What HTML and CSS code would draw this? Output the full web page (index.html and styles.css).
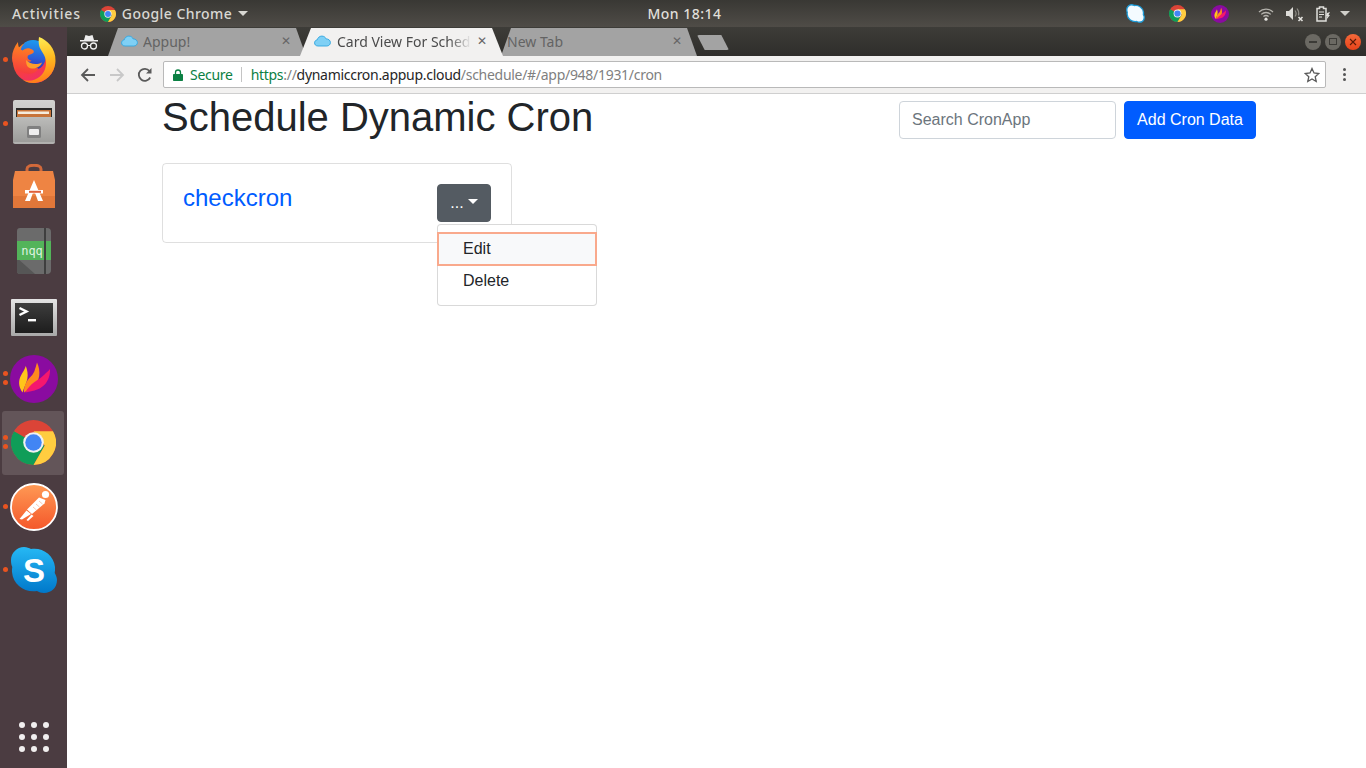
FILE: index.html
```html
<!DOCTYPE html>
<html lang="en">
<head>
<meta charset="utf-8">
<title>Card View For Schedule</title>
<link rel="stylesheet" href="styles.css">
</head>
<body>
<svg class="defs" width="0" height="0" aria-hidden="true">
  <defs>
    <symbol id="chrome" viewBox="0 0 48 48">
      <circle cx="24" cy="24" r="24" fill="#db4437"/>
      <path d="M24 24 L3.2 12 A24 24 0 0 0 24 48 L36 27.2Z" fill="#0f9d58"/>
      <path d="M24 12 H44.8 A24 24 0 0 1 24 48 L36 27.2 Z" fill="#ffcd40"/>
      <circle cx="24" cy="24" r="11" fill="#f1f1f1"/>
      <circle cx="24" cy="24" r="8.8" fill="#4285f4"/>
    </symbol>
    <symbol id="cloud" viewBox="0 0 18 12">
      <path d="M4.3 11.3C2 11.3.6 9.800.6 8c0-1.700 1.200-3 2.800-3.200C4 2.500 5.900.8 8.300.8c2.100 0 3.800 1.200 4.600 3 2.500-.1 4.500 1.700 4.500 3.900 0 2-1.700 3.600-3.900 3.600Z" fill="#7fd0f5" stroke="#35a8e0" stroke-width="1"/>
    </symbol>
    <symbol id="flockmark" viewBox="0 0 48 48">
      <circle cx="24" cy="24" r="24" fill="#8a0ba0"/>
      <path d="M12.500 37.500C8 31 8.500 25 11 20.500c1.500-3 3.500-5.500 4.800-9.500 1.500 4 2.500 8 1.500 13-.8 4.500-3.500 8.500-4.800 13.500Z" fill="#ffc61a"/>
      <path d="M14 37.500c-.2-6 2-10.500 5-14 1.500-1.800 3.500-3 5.500-7.500.8-2.500 1.500-5 2.500-8.500 2 4 2.800 9 2.200 13.500-.5 3.500-2 6.500-5 9.500-3 2.800-6.500 4.500-10.200 7Z" fill="#ff8a1e"/>
      <path d="M15.500 37.500c1.500-4 5-7.500 9-10.500 3.500-2.500 6.500-4 10-7.500 2-2 4-3.500 5.500-5.500.2 6-1.500 11.500-5.500 15.800-3 3.200-6.500 4.700-10 5.700-3 .8-6 1.300-9 2Z" fill="#f5176e"/>
    </symbol>
  </defs>
</svg>

<header class="topbar">
  <div class="topbar-left">
    <span class="top-label top-activities">Activities</span>
    <span class="app-menu">
      <svg class="app-icon"><use href="#chrome"/></svg>
      <span class="top-label">Google Chrome</span>
      <span class="caret-top"></span>
    </span>
  </div>
  <div class="clock">Mon 18:14</div>
  <div class="tray">
    <svg class="tray-skype" viewBox="-2 -2 50 50"><path d="M13 0c3 0 5 1 7 2 11-2 23 6 24 18 .2 2 0 4-.3 6 1 2 2.300 4 2.300 7 0 8-6 13-13 13-3 0-5-1-7-2-12 2-24-6-25-19-.1-2 0-3 .3-5C.4 18 0 16 0 13 0 6 6 0 13 0Z" fill="#f4fbff" stroke="#1d9ad6" stroke-width="3.500"/></svg>
    <svg class="tray-chrome"><use href="#chrome"/></svg>
    <svg class="tray-flock"><use href="#flockmark"/></svg>
    <svg class="tray-wifi" viewBox="0 0 16 14"><path d="M1 5a10 10 0 0 1 14 0M3.200 7.400a7 7 0 0 1 9.600 0M5.400 9.600a4 4 0 0 1 5.200 0" fill="none" stroke="#b4b2ac" stroke-width="1.300"/><circle cx="8" cy="12.200" r="1.600" fill="#e4e3df"/></svg>
    <svg class="tray-sound" viewBox="0 0 18 16"><path d="M0 5h3l4-4v13l-4-4H0Z" fill="#dddcd8"/><path d="M9 4.500a5 5 0 0 1 0 6M11 2.500a8 8 0 0 1 1.500 7" fill="none" stroke="#8f8d87" stroke-width="1.200"/><path d="M12.500 11l4 4m0-4l-4 4" stroke="#e4e3df" stroke-width="1.600"/></svg>
    <svg class="tray-battery" viewBox="0 0 15 16"><path d="M1 2.500h2.500V1h4v1.500H10V15H1Z" fill="none" stroke="#e0dfdb" stroke-width="1.500"/><path d="M3 6h5M3 8.500h5M3 11h3" stroke="#e0dfdb" stroke-width="1.200"/><path d="M11 7l3-1-1.500 3H14l-3.500 4.500.8-3.500H10Z" fill="#e0dfdb"/></svg>
    <span class="caret-tray"></span>
  </div>
</header>

<div class="desktop">
  <nav class="dock">
    <div class="dock-item">
      <span class="run run-one"></span>
      <svg class="ic-firefox" viewBox="0 0 44 46">
        <defs>
          <linearGradient id="ffbody" x1="0.1" y1="0" x2="0.6" y2="1"><stop offset="0" stop-color="#ff9a1a"/><stop offset=".55" stop-color="#f9403a"/><stop offset="1" stop-color="#ef2d6e"/></linearGradient>
          <linearGradient id="fftop" x1="0.4" y1="0" x2="0.5" y2="1"><stop offset="0" stop-color="#ffee55"/><stop offset=".5" stop-color="#ffb81f"/><stop offset="1" stop-color="#ff7a1a"/></linearGradient>
          <linearGradient id="ffglobe" x1="0.6" y1="0" x2="0.5" y2="1"><stop offset="0" stop-color="#1c9bf0"/><stop offset=".6" stop-color="#2c5ed8"/><stop offset="1" stop-color="#3a2bb0"/></linearGradient>
          <linearGradient id="fffox" x1="0.5" y1="0" x2="0.4" y2="1"><stop offset="0" stop-color="#ff8a1e"/><stop offset="1" stop-color="#f53a3f"/></linearGradient>
        </defs>
        <circle cx="22" cy="25" r="21" fill="url(#ffbody)"/>
        <path d="M21 3c8 0 13 6 13 15 0 9-5 15-13 15S8 27 8 18 13 3 21 3Z" fill="url(#ffglobe)"/>
        <path d="M27 0c8 3 17 11 16.500 24C43 37 33 46 21 46c-4 0-7-1-10-3 4 1 8 1 12-.5 7-3 11-9 11-16.500 0-9-6-12-7-18-.4-3-.4-5 0-8Z" fill="url(#fftop)"/>
        <path d="M6 5c0 4 1 7 4.500 8.500C13 11 17 10 21 13c1.500 1.300 1 3-1 3.800-2.500 1-4.500 1.200-4.500 3.500 0 2 2 3 4 3.500-1 1-3 1-4 .5 1 4 5 7 11 7-2 4-6 6-11 5.500C7 35.500 0 30 0 21c0-6 2.500-11.500 6-16Z" fill="url(#fffox)"/>
        <path d="M14 23c4 4 10 5.500 16 2.500-1.500 5-9 8-14 4.500-1.500-1.500-2-4.500-2-7Z" fill="#ff9d2c"/>
      </svg>
    </div>
    <div class="dock-item item-files">
      <span class="run run-one"></span>
      <svg class="ic-files" viewBox="0 0 42 44">
        <defs>
          <linearGradient id="cab" x1="0" y1="0" x2="0" y2="1"><stop offset="0" stop-color="#d2d2d0"/><stop offset="1" stop-color="#b0b0ae"/></linearGradient>
          <linearGradient id="cabfront" x1="0" y1="0" x2="0" y2="1"><stop offset="0" stop-color="#bcbcba"/><stop offset="1" stop-color="#9c9c9a"/></linearGradient>
        </defs>
        <rect width="42" height="44" rx="2" fill="url(#cab)"/>
        <rect x="3" y="8" width="36" height="10" fill="#2c2a28"/>
        <rect x="4" y="10" width="34" height="8" fill="#c8743a"/>
        <rect x="5" y="11.500" width="31" height="2.500" fill="#f5ecdd"/>
        <rect y="17" width="42" height="25" fill="url(#cabfront)"/>
        <rect x="14" y="26" width="14" height="12" rx="1.500" fill="#808080"/>
        <rect x="16" y="29" width="10" height="6" rx="1" fill="#eee"/>
      </svg>
    </div>
    <div class="dock-item item-store">
      <svg class="ic-store" viewBox="0 0 42 44">
        <path d="M14 11V5c0-5 14-5 14 0v6" fill="none" stroke="#d2693a" stroke-width="3"/>
        <path d="M2 7h38l2 9v28H0V16Z" fill="#ee8443"/>
        <path d="M0 32h42v12H0Z" fill="#e17739"/>
        <path d="M21 16l-9 21h5l4-11 4 11h5Z" fill="#fff"/>
        <rect x="12" y="26" width="18" height="3.500" fill="#fff"/>
        <rect x="16" y="26.800" width="12" height="2" fill="#e0603a"/>
      </svg>
    </div>
    <div class="dock-item">
      <svg class="ic-nqq" viewBox="0 0 34 46">
        <path d="M3 0h27a4 4 0 0 1 4 4v38a4 4 0 0 1-4 4H3a3 3 0 0 1-3-3V3a3 3 0 0 1 3-3Z" fill="#6b6b6b"/>
        <path d="M0 30l18 16H3a3 3 0 0 1-3-3Z" fill="#565656"/>
        <rect x="27" width="2" height="46" fill="#3f3f3f"/>
        <rect y="13" width="34" height="19" fill="#53b45a"/>
        <rect x="27" y="13" width="2" height="19" fill="#3f3f3f"/>
        <text x="15" y="27" class="nqq-text">nqq</text>
      </svg>
    </div>
    <div class="dock-item item-term">
      <svg class="ic-term" viewBox="0 0 46 37">
        <defs>
          <linearGradient id="termframe" x1="0" y1="0" x2="0" y2="1"><stop offset="0" stop-color="#e4e4e4"/><stop offset="1" stop-color="#a8a8a8"/></linearGradient>
          <linearGradient id="terminner" x1="0" y1="0" x2="0" y2="1"><stop offset="0" stop-color="#3d3d3d"/><stop offset="1" stop-color="#1d1d1d"/></linearGradient>
        </defs>
        <rect width="46" height="37" rx="1" fill="url(#termframe)"/>
        <rect x="4" y="4" width="38" height="30" fill="url(#terminner)"/>
        <path d="M8.500 9l7 3.500-7 3.500" fill="none" stroke="#fff" stroke-width="2.400"/>
        <rect x="17" y="20" width="8" height="2.400" fill="#fff"/>
      </svg>
    </div>
    <div class="dock-item">
      <span class="run run-two"></span><span class="run run-three"></span>
      <svg class="ic-flock"><use href="#flockmark"/></svg>
    </div>
    <div class="dock-item dock-active">
      <span class="run run-two"></span><span class="run run-three"></span>
      <svg class="ic-chrome"><use href="#chrome"/></svg>
    </div>
    <div class="dock-item item-postman">
      <span class="run run-one"></span>
      <svg class="ic-postman" viewBox="0 0 48 48">
        <defs><linearGradient id="pm" x1="0" y1="0" x2="0" y2="1"><stop offset="0" stop-color="#ff9a55"/><stop offset="1" stop-color="#f4572a"/></linearGradient></defs>
        <circle cx="24" cy="24" r="23" fill="url(#pm)" stroke="#fff" stroke-width="1.800"/>
        <circle cx="35.500" cy="11.500" r="3.600" fill="#fff"/>
        <path d="M29 14.500l6.500 2.500-1 3.500-12.500 10.500-5-4.500Z" fill="#fff"/>
        <path d="M29 18l3.500 3M26 21l3.500 3M23 24l3.500 3" stroke="#f9a27a" stroke-width=".6"/>
        <path d="M16.500 27.500l4.500 3.500-9 5.500-2.500-.5Z" fill="#fff"/>
        <path d="M21.500 31.500l2 1.500-5.500 5-1.500-1Z" fill="#fff"/>
      </svg>
    </div>
    <div class="dock-item">
      <span class="run run-one"></span>
      <svg class="ic-skype" viewBox="0 0 46 46">
        <defs><linearGradient id="sk" x1="0" y1="0" x2="0" y2="1"><stop offset="0" stop-color="#26b8f4"/><stop offset="1" stop-color="#0078ca"/></linearGradient></defs>
        <path d="M13 0c3 0 5 1 7 2 11-2 23 6 24 18 .2 2 0 4-.3 6 1 2 2.300 4 2.300 7 0 8-6 13-13 13-3 0-5-1-7-2-12 2-24-6-25-19-.1-2 0-3 .3-5C.4 18 0 16 0 13 0 6 6 0 13 0Z" fill="url(#sk)"/>
        <text x="23" y="35" class="skype-text">S</text>
      </svg>
    </div>
    <div class="dock-grid">
      <i></i><i></i><i></i><i></i><i></i><i></i><i></i><i></i><i></i>
    </div>
  </nav>

  <div class="browser">
    <div class="tabstrip">
      <svg class="incognito" viewBox="0 0 18 16"><path d="M4 6l1.500-5 3.500 1 3.500-1L14 6Z" fill="#eee"/><rect x="0" y="6" width="18" height="1.500" fill="#eee"/><circle cx="4.500" cy="12" r="3" fill="none" stroke="#eee" stroke-width="1.300"/><circle cx="13.500" cy="12" r="3" fill="none" stroke="#eee" stroke-width="1.300"/><path d="M7.500 11.500h3" stroke="#eee"/></svg>
      <div class="tab tab-bg tab-first">
        <svg class="tab-fav"><use href="#cloud"/></svg>
        <span class="tab-title">Appup!</span>
        <span class="tab-x">✕</span>
      </div>
      <div class="tab tab-on">
        <svg class="tab-fav"><use href="#cloud"/></svg>
        <span class="tab-title tab-fade">Card View For Sched</span>
        <span class="tab-x">✕</span>
      </div>
      <div class="tab tab-bg tab-third">
        <span class="tab-title">New Tab</span>
        <span class="tab-x">✕</span>
      </div>
      <div class="newtab"></div>
      <div class="winbtns">
        <span class="winbtn"><i class="win-min"></i></span>
        <span class="winbtn"><i class="win-max"></i></span>
        <span class="winbtn win-close">
          <svg viewBox="0 0 8 8"><path d="M1 1l6 6m0-6L1 7" stroke="#5a1a08" stroke-width="1.100"/></svg>
        </span>
      </div>
    </div>

    <div class="toolbar">
      <svg class="nav-ic" viewBox="0 0 16 16"><path d="M15 8H2M8 2L2 8l6 6" fill="none" stroke="#5a5a5a" stroke-width="1.800"/></svg>
      <svg class="nav-ic nav-fwd" viewBox="0 0 16 16"><path d="M1 8h13M8 2l6 6-6 6" fill="none" stroke="#c8c8c8" stroke-width="1.800"/></svg>
      <svg class="nav-ic nav-reload" viewBox="0 0 16 16"><path d="M13.200 10.500A6 6 0 1 1 12.500 4" fill="none" stroke="#5a5a5a" stroke-width="1.800"/><path d="M14.500 1v5.500H9Z" fill="#5a5a5a"/></svg>
      <div class="omnibox">
        <svg class="lock" viewBox="0 0 10 12"><path d="M2.500 5V3.500a2.500 2.500 0 0 1 5 0V5" fill="none" stroke="#0b8043" stroke-width="1.300"/><rect y="5" width="10" height="7" rx=".8" fill="#0b8043"/></svg>
        <span class="secure">Secure</span>
        <span class="sep"></span>
        <span class="url"><span class="url-scheme">https</span><span class="url-dim">://</span><span class="url-host">dynamiccron.appup.cloud</span><span class="url-dim">/schedule/#/app/948/1931/cron</span></span>
        <svg class="star" viewBox="0 0 16 16"><path d="M8 1.500l2 4.500 4.800.5-3.600 3.200 1 4.800L8 12l-4.200 2.500 1-4.800L1.200 6.500 6 6Z" fill="none" stroke="#5a5a5a" stroke-width="1.300"/></svg>
      </div>
      <div class="menu-dots"><i></i><i></i><i></i></div>
    </div>

    <main class="page">
      <div class="page-head">
        <h1 class="page-title">Schedule Dynamic Cron</h1>
        <div class="head-actions">
          <input class="search" type="text" placeholder="Search CronApp">
          <button class="btn-add" type="button">Add Cron Data</button>
        </div>
      </div>
      <section class="card">
        <a class="card-link" href="#">checkcron</a>
        <div class="dropdown">
          <button class="btn-more" type="button">...<span class="caret-btn"></span></button>
          <div class="dropdown-menu">
            <a class="dd-item dd-focus" href="#">Edit</a>
            <a class="dd-item" href="#">Delete</a>
          </div>
        </div>
      </section>
    </main>
  </div>
</div>
</body>
</html>
```

FILE: styles.css
```css
* { box-sizing: border-box; }
html, body { margin: 0; height: 768px; overflow: hidden; background: #fff; }
body { display: flex; flex-direction: column; font-family: "Liberation Sans", Arial, sans-serif; }
.defs { position: absolute; }

/* GNOME top bar */
.topbar {
  height: 27px; flex: none;
  display: grid; grid-template-columns: 1fr auto 1fr; align-items: center;
  background: linear-gradient(#393834, #4f4c47);
  color: #d9d8d3;
  font: 500 14px "Noto Sans", sans-serif;
}
.topbar-left { display: flex; align-items: center; padding-left: 12px; }
.top-label { letter-spacing: .45px; }
.top-activities { letter-spacing: .85px; }
.app-menu { display: flex; align-items: center; margin-left: 19px; }
.app-icon { width: 16px; height: 16px; margin-right: 6px; }
.caret-top { margin-left: 6px; border: 5px solid transparent; border-top-color: #d9d8d3; border-bottom-width: 0; }
.clock { letter-spacing: .5px; color: #e0dfda; margin-left: 3px; }
.tray { display: flex; align-items: center; justify-content: flex-end; padding-right: 16px; }
.tray-skype { width: 19px; height: 19px; margin-right: 24px; }
.tray-chrome { width: 17px; height: 17px; margin-right: 25px; }
.tray-flock { width: 18px; height: 18px; margin-right: 29px; }
.tray-wifi { width: 16px; height: 14px; margin-right: 12px; }
.tray-sound { width: 18px; height: 16px; margin-right: 12px; }
.tray-battery { width: 15px; height: 16px; margin-right: 9px; }
.caret-tray { border: 5px solid transparent; border-top-color: #d0cfca; border-bottom-width: 0; }

.desktop { flex: 1; display: flex; min-height: 0; }

/* Dock */
.dock {
  width: 67px; flex: none;
  display: flex; flex-direction: column;
  background: #4b3c41; padding-top: 1px;
}
.dock-item { position: relative; height: 63.800px; flex: none; display: flex; align-items: center; justify-content: center; }
.dock-active { margin: 0 3px 0 2px; background: #635559; border-radius: 3px; }
.dock-active .run { left: 1px; }
.run { position: absolute; left: 3px; width: 5px; height: 5px; border-radius: 50%; background: #e95420; }
.run-one { top: 29px; }
.run-two { top: 24px; }
.run-three { top: 33px; }
.item-files svg { margin-top: -4px; }
.item-store svg { margin-top: -2px; }
.item-term svg { margin-top: 4px; }
.item-postman svg { margin-top: 2px; }
.ic-firefox { width: 44px; height: 46px; }
.ic-files { width: 42px; height: 44px; }
.ic-store { width: 42px; height: 44px; }
.ic-nqq { width: 34px; height: 46px; }
.ic-term { width: 46px; height: 37px; }
.ic-flock { width: 48px; height: 48px; }
.ic-chrome { width: 45px; height: 45px; margin-left: 1px; }
.ic-postman { width: 48px; height: 48px; }
.ic-skype { width: 46px; height: 46px; }
.nqq-text { font: 12px "DejaVu Sans Mono", monospace; fill: #dff3e0; text-anchor: middle; }
.skype-text { font: 700 33px "Liberation Sans", sans-serif; fill: #fff; text-anchor: middle; }
.dock-grid {
  margin: auto auto 16px; display: grid; grid-template-columns: repeat(3, 6px); gap: 6px;
}
.dock-grid i { width: 6px; height: 6px; border-radius: 50%; background: #f1efef; }

/* Chrome window */
.browser { flex: 1; min-width: 0; display: flex; flex-direction: column; background: #fff; }
.tabstrip {
  height: 29px; flex: none; display: flex; align-items: flex-end;
  background: linear-gradient(#3d3c38, #2f2e2b);
  padding-left: 13px;
}
.incognito { width: 18px; height: 16px; margin-bottom: 6px; margin-right: 10px; flex: none; }
.tab {
  height: 28px; padding-bottom: 2px; display: flex; align-items: center; flex: none;
  font: 14px "Noto Sans", sans-serif;
  clip-path: polygon(0 100%, 10px 0, calc(100% - 10px) 0, 100% 100%);
}
.tab-bg { background: #a3a3a3; color: #636363; }
.tab-first { width: 198px; padding-left: 13px; padding-right: 15px; margin-right: -6px; }
.tab-first .tab-title { margin-left: -1px; }
.tab-on { width: 203px; padding-left: 14px; padding-right: 16px; background: #f2f1f0; color: #4b4b4b; margin-right: -2px; position: relative; z-index: 1; clip-path: polygon(0 100%, 11px 0, calc(100% - 11px) 0, 100% 100%); }
.tab-third { width: 196px; padding-left: 6px; padding-right: 15px; }
.tab-third .tab-x { margin-left: auto; }
.tab-fav { width: 17px; height: 12px; margin-right: 6px; flex: none; }
.tab-title { flex: 1; min-width: 0; white-space: nowrap; overflow: hidden; }
.tab-fade { -webkit-mask-image: linear-gradient(90deg, #000 82%, transparent 98%); mask-image: linear-gradient(90deg, #000 82%, transparent 98%); }
.tab-x { flex: none; font-size: 12px; line-height: 1; color: #666; margin-left: 3px; }
.newtab {
  width: 32px; height: 15px; margin: 0 0 6px 0; flex: none;
  background: #a3a3a3; clip-path: polygon(0 0, 76% 0, 100% 100%, 24% 100%);
  border-radius: 2px;
}
.winbtns { margin-left: auto; display: flex; align-items: center; gap: 4px; padding: 0 5px 0 0; align-self: center; }
.winbtn { width: 16px; height: 16px; border-radius: 50%; background: #6b6963; display: flex; align-items: center; justify-content: center; }
.win-min { width: 8px; height: 2px; background: #3c3b37; }
.win-max { width: 8px; height: 7px; border: 1px solid #3c3b37; }
.win-close { background: linear-gradient(#f4693a, #e8431a); }
.win-close svg { width: 8px; height: 8px; }

.toolbar {
  height: 38px; flex: none; display: flex; align-items: center;
  background: #f2f1f0; border-bottom: 1px solid #cfcfcf;
  padding-left: 13px;
}
.nav-ic { width: 16px; height: 16px; flex: none; margin-right: 13px; }
.nav-reload { margin-right: 10px; margin-left: -1px; }
.omnibox {
  width: 1163px; height: 27px; flex: none; display: flex; align-items: center;
  background: #fff; border: 1px solid #b9b9b9; border-radius: 2px;
  padding: 0 5px 0 9px;
  font: 14px "Noto Sans", sans-serif; white-space: nowrap; letter-spacing: -.29px;
}
.lock { width: 10px; height: 12px; margin-right: 7px; flex: none; }
.secure { color: #0b8043; }
.sep { width: 1px; height: 15px; background: #c4c4c4; margin: 0 9px 0 8px; }
.url-scheme { color: #0b8043; }
.url-dim { color: #7f7f7f; }
.url-host { color: #262626; }
.star { width: 16px; height: 16px; margin-left: auto; }
.menu-dots { margin-left: 17px; display: grid; gap: 2px; }
.menu-dots i { width: 3px; height: 3px; border-radius: 50%; background: #555; }

/* Page */
.page { flex: 1; padding: 0 110px 0 95px; color: #212529; font-size: 16px; }
.page-head { display: flex; justify-content: space-between; align-items: flex-start; }
.page-title { margin: 0; font-size: 40px; font-weight: 500; line-height: 46px; }
.head-actions { display: flex; gap: 8px; margin-top: 7px; }
.search {
  width: 217px; height: 38px; padding: 6px 12px;
  border: 1px solid #ced4da; border-radius: 4px;
  font: 16px "Liberation Sans", sans-serif; color: #495057;
}
.search::placeholder { color: #6c757d; opacity: 1; }
.btn-add {
  width: 132px; height: 38px; border: 1px solid #005cff; border-radius: 4px;
  background: #005cff; color: #fff; font: 16px "Liberation Sans", sans-serif;
}
.card {
  width: 350px; height: 80px; margin-top: 23px;
  border: 1px solid rgba(0,0,0,.125); border-radius: 4px;
  padding: 20px; display: flex; justify-content: space-between; align-items: flex-start;
}
.card-link { font-size: 24px; line-height: 28px; color: #005cff; text-decoration: none; }
.dropdown { position: relative; }
.btn-more {
  width: 54px; height: 38px; border: 1px solid #545b62; border-radius: 4px;
  background: #545b62; color: #fff; font: 16px "Liberation Sans", sans-serif; padding: 0;
}
.caret-btn { display: inline-block; margin-left: 4px; vertical-align: 4px; border: 5px solid transparent; border-top-color: #fff; border-bottom-width: 0; }
.dropdown-menu {
  position: absolute; top: 40px; left: 0; width: 160px; height: 82px;
  padding: 8px 0; background: #fff;
  border: 1px solid rgba(0,0,0,.15); border-radius: 4px;
  z-index: 3;
}
.dd-item { display: block; height: 32px; padding: 4px 25px; line-height: 24px; color: #212529; text-decoration: none; }
.dd-focus { background: #f8f9fa; outline: 2px solid #f9a98c; outline-offset: -1px; }
```
